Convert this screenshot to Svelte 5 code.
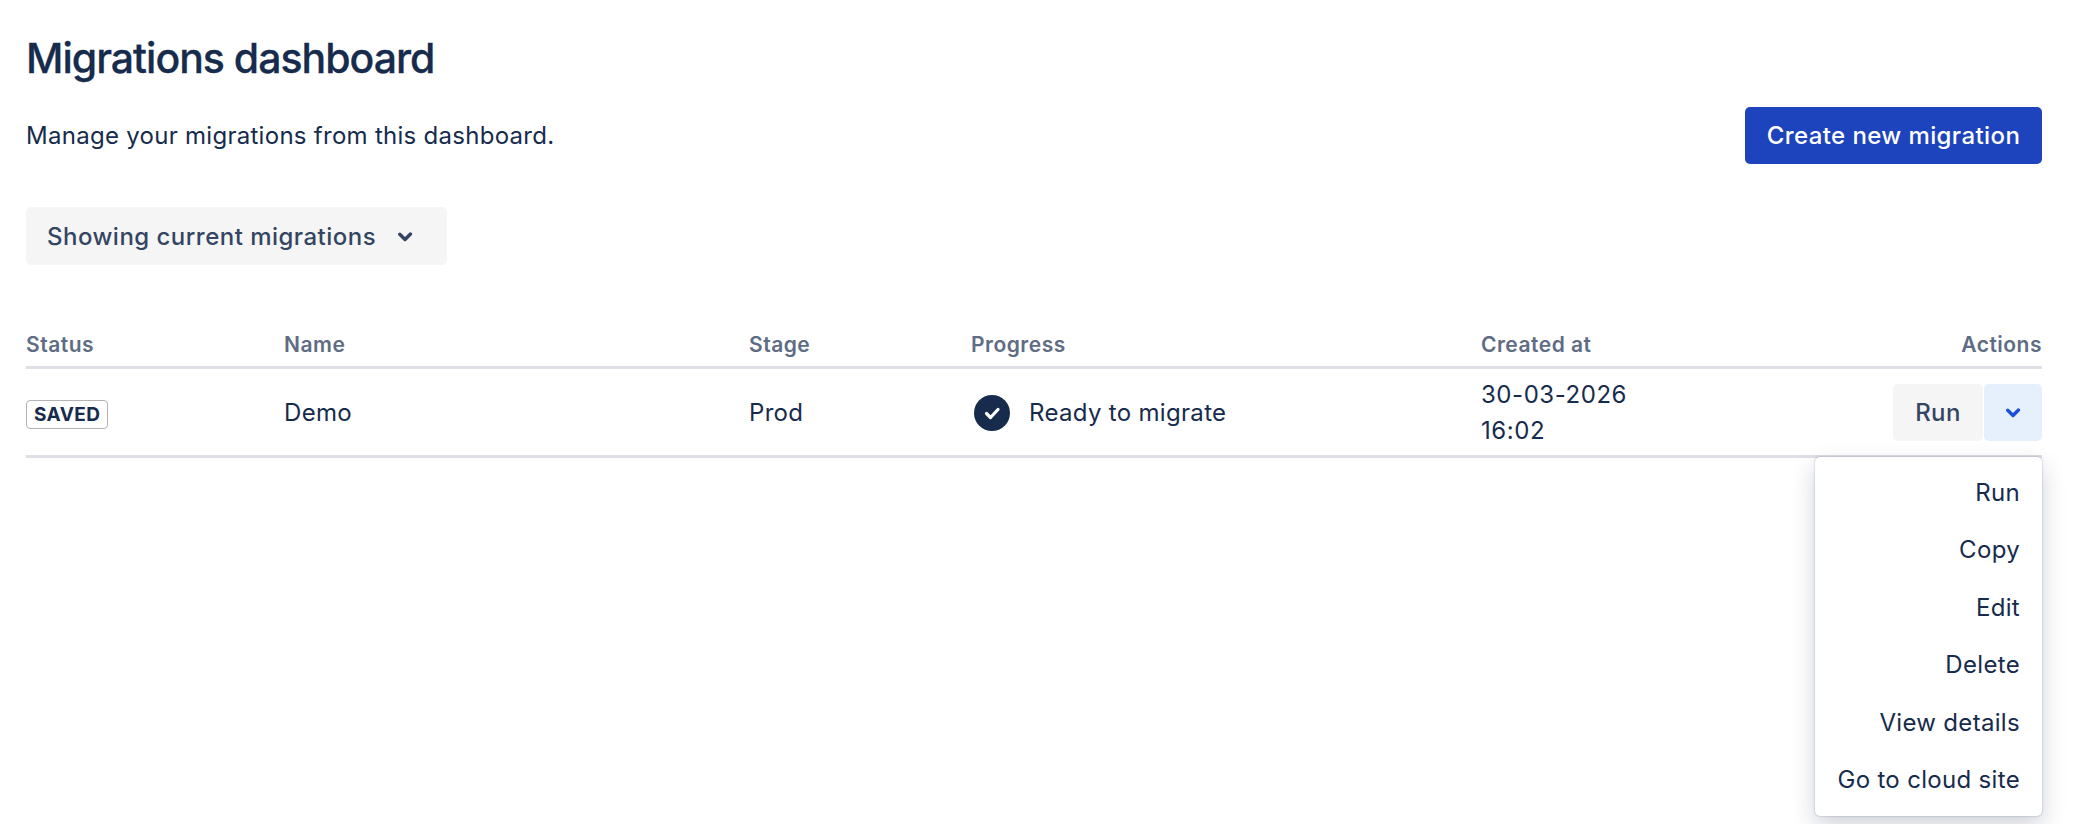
<script lang="ts">
const menuItems = ['Run', 'Copy', 'Edit', 'Delete', 'View details', 'Go to cloud site'];
</script>

<div class="page">
  <h1>Migrations dashboard</h1>

  <div class="intro">
    <p>Manage your migrations from this dashboard.</p>
    <button class="btn-primary">Create new migration</button>
  </div>

  <button class="btn-filter">
    Showing current migrations
    <svg width="42" height="42" viewBox="0 0 24 24" aria-hidden="true"><path d="M8.3 10.3a1 1 0 0 1 1.4 0l2.3 2.3 2.3-2.3a1 1 0 1 1 1.4 1.4l-3 3a1 1 0 0 1-1.4 0l-3-3a1 1 0 0 1 0-1.4z" fill="currentColor"/></svg>
  </button>

  <table>
    <colgroup>
      <col class="c-status" />
      <col class="c-name" />
      <col class="c-stage" />
      <col class="c-progress" />
      <col class="c-created" />
      <col />
    </colgroup>
    <thead>
      <tr>
        <th>Status</th>
        <th>Name</th>
        <th>Stage</th>
        <th>Progress</th>
        <th>Created at</th>
        <th class="right">Actions</th>
      </tr>
    </thead>
    <tbody>
      <tr>
        <td><span class="lozenge">SAVED</span></td>
        <td>Demo</td>
        <td>Prod</td>
        <td>
          <div class="progress">
            <svg width="42" height="42" viewBox="0 0 42 42" aria-hidden="true">
              <circle cx="21" cy="21" r="18" fill="#172b4d" />
              <path d="M15.5 21.5l4 4 7.5-8" fill="none" stroke="#fff" stroke-width="3.2" stroke-linecap="round" stroke-linejoin="round" />
            </svg>
            Ready to migrate
          </div>
        </td>
        <td class="date">30-03-2026<br />16:02</td>
        <td class="right">
          <div class="actions">
            <button class="btn-run">Run</button>
            <button class="btn-more" aria-label="More actions">
              <svg width="42" height="42" viewBox="0 0 24 24" aria-hidden="true"><path d="M8.3 10.3a1 1 0 0 1 1.4 0l2.3 2.3 2.3-2.3a1 1 0 1 1 1.4 1.4l-3 3a1 1 0 0 1-1.4 0l-3-3a1 1 0 0 1 0-1.4z" fill="currentColor"/></svg>
            </button>
            <ul class="menu">
              {#each menuItems as item}
                <li>{item}</li>
              {/each}
            </ul>
          </div>
        </td>
      </tr>
    </tbody>
  </table>
</div>

<style>
  :global(body) {
    margin: 0;
    background: #fff;
  }
  .page {
    font-family: Inter, "Liberation Sans", sans-serif;
    font-size: 24px;
    letter-spacing: 0.32px;
    color: #172b4d;
    padding: 32px 40px 0 26px;
    height: 824px;
    box-sizing: border-box;
    overflow: hidden;
  }
  h1 {
    margin: 0;
    font-size: 41px;
    line-height: 52px;
    font-weight: 500;
    letter-spacing: -1px;
    -webkit-text-stroke: 0.3px #172b4d;
  }
  .intro {
    display: flex;
    justify-content: space-between;
    align-items: center;
    margin-top: 23px;
  }
  p {
    margin: 0;
    letter-spacing: 0.28px;
  }
  button {
    font-family: inherit;
    letter-spacing: 0.4px;
    border: none;
    border-radius: 5px;
    font-size: 24px;
    height: 57px;
    cursor: pointer;
  }
  .btn-primary {
    width: 297px;
    padding: 0;
    background: #1e44bd;
    color: #fff;
    font-weight: 500;
  }
  .btn-filter {
    display: flex;
    align-items: center;
    gap: 8px;
    width: 421px;
    height: 58px;
    margin-top: 43px;
    padding: 0 0 0 21px;
    background: #f5f5f5;
    color: #344563;
    font-weight: 500;
    letter-spacing: 0.48px;
  }
  table {
    width: 100%;
    margin-top: 65px;
    border-collapse: collapse;
    table-layout: fixed;
  }
  .c-status { width: 258px; }
  .c-name { width: 465px; }
  .c-stage { width: 222px; }
  .c-progress { width: 510px; }
  .c-created { width: 300px; }
  th {
    text-align: left;
    font-size: 21px;
    letter-spacing: 0.5px;
    font-weight: 600;
    color: #5e6c84;
    padding: 0 0 6px;
    border-bottom: 3px solid #dfdfe5;
    line-height: 30px;
  }
  td {
    padding: 0;
    height: 86px;
    line-height: 36px;
    border-bottom: 3px solid #dfdfe5;
    vertical-align: middle;
  }
  td:not(.right) {
    height: 84px;
    padding-top: 2px;
  }
  .date {
    letter-spacing: 0.55px;
  }
  .right {
    text-align: right;
  }
  .lozenge {
    display: inline-block;
    border: 1px solid #b3b3b3;
    border-radius: 4px;
    padding: 0 7px;
    font-size: 19px;
    line-height: 27px;
    font-weight: 700;
    letter-spacing: 0.4px;
    vertical-align: middle;
  }
  .progress {
    display: flex;
    align-items: center;
    gap: 16px;
  }
  .actions {
    position: relative;
    display: flex;
    justify-content: flex-end;
    gap: 1px;
  }
  .btn-run {
    width: 90px;
    padding: 0;
    background: #f5f5f5;
    color: #344563;
    font-weight: 500;
  }
  .btn-more {
    width: 58px;
    padding: 0;
    display: flex;
    align-items: center;
    justify-content: center;
    background: #e6effc;
    color: #1d50d8;
  }
  .menu {
    position: absolute;
    top: 73px;
    right: 0;
    width: 227px;
    margin: 0;
    padding: 7px 0;
    list-style: none;
    background: #fff;
    border-radius: 5px;
    box-shadow: 0 10px 24px rgba(9, 30, 66, 0.2), 0 0 2px rgba(9, 30, 66, 0.35);
    text-align: right;
  }
  .menu li {
    height: 57.6px;
    line-height: 57.6px;
    padding-right: 22px;
  }
</style>
